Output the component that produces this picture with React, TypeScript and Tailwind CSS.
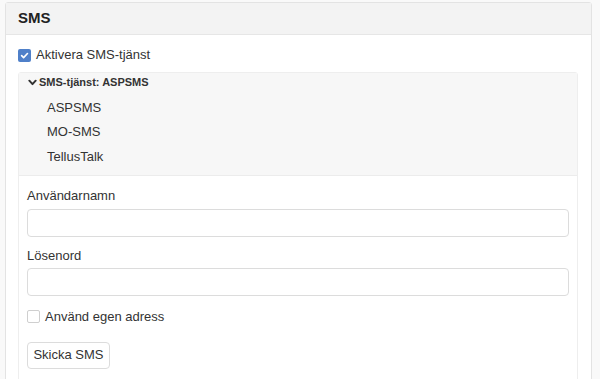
import { useState } from "react";

function Check({ checked }: { checked: boolean }) {
  if (checked) {
    return (
      <span className="flex h-[13px] w-[13px] items-center justify-center rounded-[2px] bg-[#4f80c9]">
        <svg width="9" height="9" viewBox="0 0 10 10" fill="none">
          <path d="M1.8 5.2 L4 7.3 L8.3 2.8" stroke="white" strokeWidth="1.8" strokeLinecap="round" strokeLinejoin="round" />
        </svg>
      </span>
    );
  }
  return <span className="h-[13px] w-[13px] rounded-[2px] border border-[#cfcfcf] bg-white" />;
}

export default function App() {
  const [active] = useState(true);
  const providers = ["ASPSMS", "MO-SMS", "TellusTalk"];

  return (
    <div className="h-[379px] overflow-hidden bg-[#f9f9f9] pl-[5px] pr-[8px] pt-[2px] text-[#333] [font-family:'Liberation_Sans',Arial,sans-serif]">
      <div className="h-[400px] rounded-t-[3px] border border-[#e3e3e3] bg-white">
        {/* rubrik */}
        <div className="flex h-[32px] items-center border-b border-[#e6e6e6] bg-[#f3f3f3] px-[12px] text-[15px] font-bold text-[#222]">
          SMS
        </div>

        <div className="pl-[12px] pr-[13px] pt-[13px]">
          <label className="flex h-[14px] items-center gap-[5px] text-[13px]">
            <Check checked={active} />
            <span>Aktivera SMS-tjänst</span>
          </label>

          <div className="mt-[10px] rounded-t-[3px] border border-[#eeeeee]">
            {/* tjänsteval */}
            <div className="border-b border-[#ececec] bg-[#f7f7f7] pb-[6px]">
              <div className="flex h-[19px] items-center gap-[2px] pl-[9px] text-[11px] font-bold text-[#333]">
                <svg width="9" height="9" viewBox="0 0 10 10" fill="none">
                  <path d="M1.5 3 L5 6.8 L8.5 3" stroke="#333" strokeWidth="2.2" strokeLinecap="round" strokeLinejoin="round" />
                </svg>
                <span>SMS-tjänst: ASPSMS</span>
              </div>
              <ul className="mt-[3px] text-[13px]">
                {providers.map((p) => (
                  <li key={p} className="flex h-[24.5px] items-center pl-[28px]">
                    {p}
                  </li>
                ))}
              </ul>
            </div>

            {/* formulär */}
            <div className="px-[8px] pb-[20px] pt-[12px]">
              <div className="flex h-[16px] items-center text-[13px]">Användarnamn</div>
              <input className="mt-[5px] block h-[28px] w-full rounded-[4px] border border-[#dcdcdc] bg-white" />

              <div className="mt-[11px] flex h-[16px] items-center text-[13px]">Lösenord</div>
              <input type="password" className="mt-[4px] block h-[28px] w-full rounded-[4px] border border-[#dcdcdc] bg-white" />

              <label className="mt-[14px] flex h-[14px] items-center gap-[5px] text-[13px]">
                <Check checked={false} />
                <span>Använd egen adress</span>
              </label>

              <button className="mt-[18px] flex h-[27px] w-[83px] items-center justify-center rounded-[4px] border border-[#dcdcdc] bg-white text-[13px] text-[#333]">
                Skicka SMS
              </button>
            </div>
          </div>
        </div>
      </div>
    </div>
  );
}
